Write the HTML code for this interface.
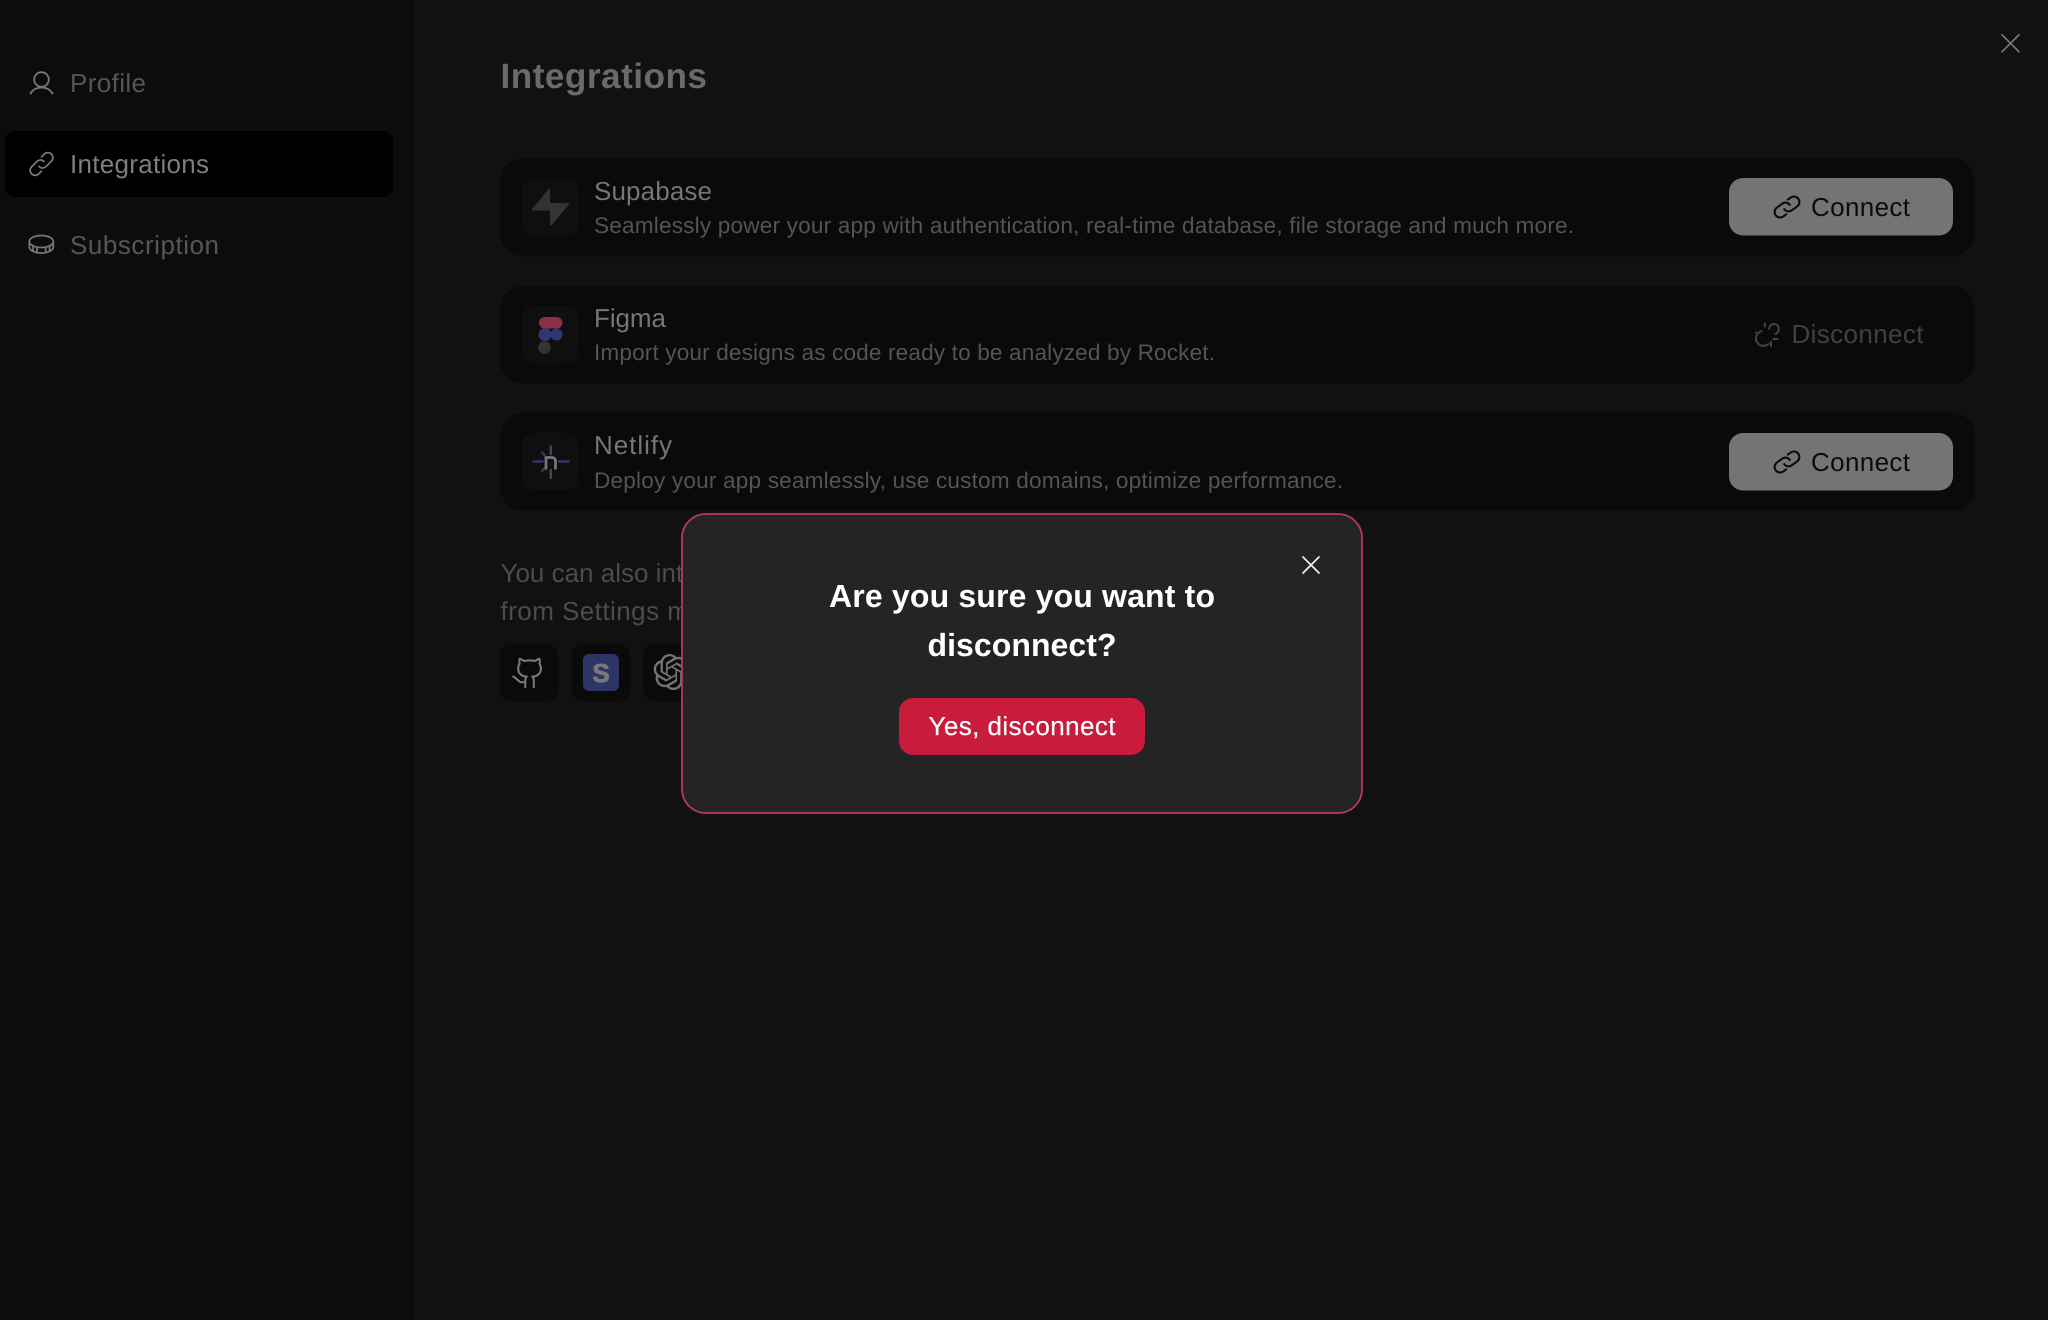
<!DOCTYPE html>
<html lang="en">
<head>
<meta charset="utf-8">
<title>Integrations</title>
<style>
html,body{margin:0;padding:0;background:#111;width:2048px;height:1320px;overflow:hidden}
svg{display:block}
text{font-family:"Liberation Sans",sans-serif;text-rendering:geometricPrecision}
.nav{font-size:26px}
.t{font-size:26px;fill:#767676}
.d{font-size:22.6px;fill:#545454}
.g{fill:none;stroke-linecap:round;stroke-linejoin:round}
</style>
</head>
<body>
<svg xmlns="http://www.w3.org/2000/svg" width="2048" height="1320" viewBox="0 0 2048 1320">
  <rect width="2048" height="1320" fill="#111111"/>
  <rect width="414.500" height="1320" fill="#0c0c0c"/>
  <rect x="5" y="131" width="388" height="66" rx="10" fill="#000"/>

  <!-- Sidebar icons -->
  <g class="g" stroke="#7a7a7a" stroke-width="1.800">
    <circle cx="41.500" cy="79.500" r="7.300"/>
    <path d="M30.500 93.500c2.400-4 6.300-6 11-6s8.600 2 11 6"/>
  </g>
  <g class="g" stroke="#7a7a7a" stroke-width="1.700" transform="translate(41.500 164) rotate(-45) scale(1)">
    <path d="M3.500 0C3.500-3.500 1-5 -2-5H-9a5 5 0 0 0 0 10H-5"/>
    <path d="M-3.500 0C-3.500 3.500-1 5 2 5H9a5 5 0 0 0 0-10H5"/>
  </g>
  <g class="g" stroke="#7a7a7a" stroke-width="1.700">
    <ellipse cx="41.300" cy="241.500" rx="12" ry="6"/>
    <path d="M29.300 241.500v5.500c0 3.300 5.400 6 12 6s12-2.700 12-6v-5.500"/>
    <path d="M37 247.500v5.200M45.600 247.500v5.200M33 245.500v5.500M49.600 245.500v5.500"/>
  </g>

  <text class="nav" x="70" y="92" textLength="76" fill="#565656">Profile</text>
  <text class="nav" x="70" y="173" textLength="139" fill="#7e7e7e">Integrations</text>
  <text class="nav" x="70" y="254" textLength="149" fill="#565656">Subscription</text>

  <!-- Heading -->
  <text x="500.500" y="88" font-size="35.200" font-weight="700" textLength="206.500" fill="#6a6a6a">Integrations</text>

  <!-- Top close -->
  <path class="g" d="M2002 34.800l17 17M2019 34.800l-17 17" stroke="#7a7a7a" stroke-width="1.700"/>

  <!-- Cards -->
  <rect x="500" y="158" width="1475" height="98.500" rx="24" fill="#0a0a0a"/>
  <rect x="500" y="285.500" width="1475" height="98.500" rx="24" fill="#0a0a0a"/>
  <rect x="500" y="412.500" width="1475" height="98.500" rx="24" fill="#0a0a0a"/>

  <!-- Card icon tiles -->
  <rect x="522" y="179" width="57" height="57" rx="12" fill="#0f0f0f"/>
  <rect x="522" y="306" width="57" height="57" rx="12" fill="#0f0f0f"/>
  <rect x="522" y="433" width="57" height="57" rx="12" fill="#0f0f0f"/>

  <!-- Supabase bolt -->
  <path d="M549 190v19.500h-16z" fill="#323237" stroke="#323237" stroke-width="2" stroke-linejoin="round"/>
  <path d="M551 204h17l-17 20.500z" fill="#343434" stroke="#343434" stroke-width="2" stroke-linejoin="round"/>

  <!-- Figma -->
  <rect x="539" y="317" width="23.500" height="11.500" rx="5.700" fill="#8c2e45"/>
  <circle cx="545" cy="334.500" r="6.500" fill="#2d3870"/>
  <circle cx="556.500" cy="334.500" r="6" fill="#2d3870"/>
  <circle cx="544.500" cy="347.500" r="6.300" fill="#343434"/>

  <!-- Netlify -->
  <g stroke-linecap="round" fill="none">
    <path d="M533.500 461.500h9M559 461.500h9.500" stroke="#30396c" stroke-width="2.400"/>
    <path d="M550.800 446.500v7.500M550.800 470v8" stroke="#464652" stroke-width="2.400"/>
    <path d="M542 452.500l2.500 2.500M542 471l2.500-2.500" stroke="#30396c" stroke-width="2.400"/>
    <path d="M546 469.500v-12h5.500c2.500 0 4 1.300 4 4v8" stroke="#747474" stroke-width="2.800" stroke-linecap="butt"/>
  </g>

  <!-- Card text -->
  <text class="t" x="594" y="200" textLength="118">Supabase</text>
  <text class="d" x="594" y="233" textLength="980">Seamlessly power your app with authentication, real-time database, file storage and much more.</text>
  <text class="t" x="594" y="327" textLength="72">Figma</text>
  <text class="d" x="594" y="360" textLength="621">Import your designs as code ready to be analyzed by Rocket.</text>
  <text class="t" x="594" y="454" textLength="78">Netlify</text>
  <text class="d" x="594" y="488" textLength="749">Deploy your app seamlessly, use custom domains, optimize performance.</text>

  <!-- Connect 1 -->
  <rect x="1729" y="178" width="224" height="57.500" rx="14" fill="#747474"/>
  <g class="g" stroke="#0b0b0b" stroke-width="2.100" transform="translate(1787 207) rotate(-36)">
    <path d="M3.500 0C3.500-3.500 1-5.500-2-5.500H-8.500a5.500 5.500 0 0 0 0 11H-5"/>
    <path d="M-3.500 0C-3.500 3.500-1 5.500 2 5.500H8.500a5.500 5.500 0 0 0 0-11H5"/>
  </g>
  <text x="1811" y="216" font-size="26" textLength="99" fill="#0b0b0b">Connect</text>

  <!-- Disconnect -->
  <g class="g" stroke="#484144" stroke-width="2">
    <path d="M1761.500 331c-3.500 1.500-5.500 4.200-5.500 7.500 0 4 3.300 7.300 7.500 7.300 2 0 3.700-.8 5-2"/>
    <path d="M1769 329c.5-2.800 2.500-5 5-5 3 0 4.800 2.200 4.800 5 0 2.500-1.500 4-3.300 5"/>
    <path d="M1765 323.500v3M1771 342v4M1773.500 339h4M1756 332.500h.2"/>
  </g>
  <text x="1791.500" y="343" font-size="26" textLength="132" fill="#463f42">Disconnect</text>

  <!-- Connect 2 -->
  <rect x="1729" y="433" width="224" height="57.500" rx="14" fill="#747474"/>
  <g class="g" stroke="#0b0b0b" stroke-width="2.100" transform="translate(1787 462) rotate(-36)">
    <path d="M3.500 0C3.500-3.500 1-5.500-2-5.500H-8.500a5.500 5.500 0 0 0 0 11H-5"/>
    <path d="M-3.500 0C-3.500 3.500-1 5.500 2 5.500H8.500a5.500 5.500 0 0 0 0-11H5"/>
  </g>
  <text x="1811" y="471" font-size="26" textLength="99" fill="#0b0b0b">Connect</text>

  <!-- Footer text (continues behind modal) -->
  <text x="500.500" y="582" font-size="26" letter-spacing="0" fill="#4c4c4c">You can also integrate</text>
  <text x="500.500" y="620" font-size="26" letter-spacing="0.450" fill="#4c4c4c">from Settings menu</text>

  <!-- Footer tiles -->
  <rect x="500" y="644" width="58" height="57.500" rx="12" fill="#0a0a0a"/>
  <rect x="572" y="644" width="58" height="57.500" rx="12" fill="#0a0a0a"/>
  <rect x="643" y="644" width="58" height="57.500" rx="12" fill="#0a0a0a"/>

  <g class="g" stroke="#7a7a7a" stroke-width="1.450" transform="translate(512.500 656) scale(1.420)">
    <path d="M15 22v-4a4.800 4.800 0 0 0-1-3.500c3 0 6-2 6-5.500.08-1.250-.27-2.480-1-3.500.28-1.150.28-2.350 0-3.500 0 0-1 0-3 1.500-2.640-.5-5.360-.5-8 0C6 2 5 2 5 2c-.3 1.150-.3 2.350 0 3.500A5.403 5.403 0 0 0 4 9c0 3.500 3 5.500 6 5.500-.39.49-.68 1.050-.85 1.650-.17.6-.22 1.230-.15 1.850v4"/>
    <path d="M9 18c-4.510 2-5-2-8.500-3.500"/>
  </g>

  <rect x="583" y="654" width="36" height="37" rx="6" fill="#2c3566"/>
  <text x="601" y="682" font-size="26" font-weight="700" text-anchor="middle" fill="#787878" stroke="#787878" stroke-width="0.800">S</text>

  <path transform="translate(653.500 654) scale(1.500)" fill="#747474" d="M22.2819 9.8211a5.9847 5.9847 0 0 0-.5157-4.9108 6.0462 6.0462 0 0 0-6.5098-2.9A6.0651 6.0651 0 0 0 4.9807 4.1818a5.9847 5.9847 0 0 0-3.9977 2.9 6.0462 6.0462 0 0 0 .7427 7.0966 5.98 5.98 0 0 0 .511 4.9107 6.051 6.051 0 0 0 6.5146 2.9001A5.9847 5.9847 0 0 0 13.2599 24a6.0557 6.0557 0 0 0 5.7718-4.2058 5.9894 5.9894 0 0 0 3.9977-2.9001 6.0557 6.0557 0 0 0-.7475-7.0729zm-9.022 12.6081a4.4755 4.4755 0 0 1-2.8764-1.0408l.1419-.0804 4.7783-2.7582a.7948.7948 0 0 0 .3927-.6813v-6.7369l2.02 1.1686a.071.071 0 0 1 .038.052v5.5826a4.504 4.504 0 0 1-4.4945 4.4944zm-9.6607-4.1254a4.4708 4.4708 0 0 1-.5346-3.0137l.142.0852 4.783 2.7582a.7712.7712 0 0 0 .7806 0l5.8428-3.3685v2.3324a.0804.0804 0 0 1-.0332.0615L9.74 19.9502a4.4992 4.4992 0 0 1-6.1408-1.6464zM2.3408 7.8956a4.485 4.485 0 0 1 2.3655-1.9728V11.6a.7664.7664 0 0 0 .3879.6765l5.8144 3.3543-2.0201 1.1685a.0757.0757 0 0 1-.071 0l-4.8303-2.7865A4.504 4.504 0 0 1 2.3408 7.872zm16.5963 3.8558L13.1038 8.364 15.1192 7.2a.0757.0757 0 0 1 .071 0l4.8303 2.7913a4.4944 4.4944 0 0 1-.6765 8.1042v-5.6772a.79.79 0 0 0-.407-.667zm2.0107-3.0231l-.142-.0852-4.7735-2.7818a.7759.7759 0 0 0-.7854 0L9.409 9.2297V6.8974a.0662.0662 0 0 1 .0284-.0615l4.8303-2.7866a4.4992 4.4992 0 0 1 6.6802 4.66zM8.3065 12.863l-2.02-1.1638a.0804.0804 0 0 1-.038-.0567V6.0742a4.4992 4.4992 0 0 1 7.3757-3.4537l-.142.0805L8.704 5.459a.7948.7948 0 0 0-.3927.6813zm1.0976-2.3654l2.602-1.4998 2.6069 1.4998v2.9994l-2.5974 1.4997-2.6067-1.4997Z"/>

  <!-- Modal -->
  <rect x="682" y="514" width="680" height="299" rx="24" fill="#242424" stroke="#bb3a55" stroke-width="1.800"/>
  <path class="g" d="M1303 557l16 16M1319 557l-16 16" stroke="#f2f2f2" stroke-width="1.700"/>
  <text x="829" y="607" font-size="32" font-weight="700" textLength="386" fill="#ffffff">Are you sure you want to</text>
  <text x="927.500" y="656" font-size="32" font-weight="700" textLength="189" fill="#ffffff">disconnect?</text>
  <rect x="899" y="698" width="246" height="57" rx="14" fill="#c91b3c"/>
  <text x="928.500" y="735" font-size="26" textLength="187" fill="#ffffff" stroke="#ffffff" stroke-width="0.200">Yes, disconnect</text>
</svg>
</body>
</html>
